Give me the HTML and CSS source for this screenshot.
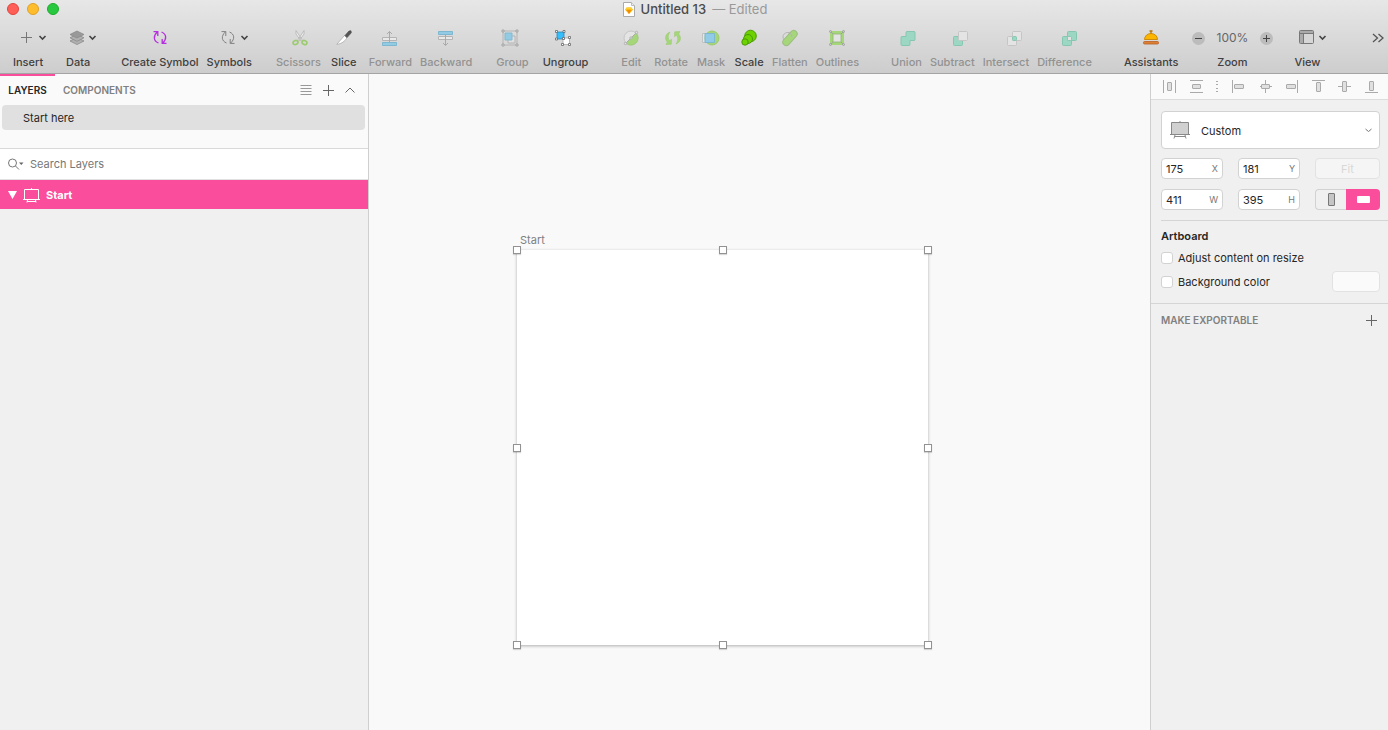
FILE: index.html
```html
<!DOCTYPE html>
<html lang="en">
<head>
<meta charset="utf-8">
<title>Untitled 13</title>
<link rel="stylesheet" href="styles.css">
</head>
<body>
<div class="window">
  <header class="header">
    <div class="titlebar">
      <div class="lights">
        <button class="light light-close" aria-label="Close"></button>
        <button class="light light-min" aria-label="Minimize"></button>
        <button class="light light-zoom" aria-label="Full screen"></button>
      </div>
      <h1 class="title">
        <svg width="12" height="15" viewBox="0 0 12 15"><path d="M.5.5h8l3 3v11H.5z" fill="#fff" stroke="#aaa"/><path d="M8.500 .5v3h3" fill="#eee" stroke="#bbb"/><path d="M3.700 5.500h4.600l1.700 2.300L6 12 2 7.800z" fill="#fdad00"/><path d="M3.700 5.500h4.600L10 7.800H2z" fill="#fdd231"/><path d="M4 7.800h4L6 12z" fill="#f08a00"/></svg>
        <span>Untitled 13</span><span class="edited">— Edited</span>
      </h1>
      <div></div>
    </div>
    <nav class="toolbar" aria-label="Toolbar">
      <div class="group">
        <button class="tool"><span class="icon with-menu"><svg width="28" height="20" viewBox="0 0 28 20" fill="none"><path d="M6.500 4v11M1 9.500h11" stroke="#777"/><path d="M19.500 8l3 3 3-3" stroke="#444" stroke-width="1.600"/></svg></span>Insert</button>
      </div>
      <div class="group gap-m">
        <button class="tool"><span class="icon with-menu"><svg width="28" height="20" viewBox="0 0 28 20" fill="none"><g stroke="#8a8a8a" fill="#b0b0b0" stroke-width=".8"><path d="M0 13L7 9.500l7 3.500-7 3.500z"/><path d="M0 9.800L7 6.300l7 3.500-7 3.500z"/><path d="M0 6.500L7 3l7 3.500L7 10z" fill="#999"/></g><path d="M19.500 8l3 3 3-3" stroke="#444" stroke-width="1.600"/></svg></span>Data</button>
      </div>
      <div class="group gap-xl">
        <button class="tool"><span class="icon"><svg width="16" height="20" viewBox="0 0 16 20" fill="none" stroke="#b52ee0" stroke-width="1.300"><path d="M6.500 15C1.500 13 .8 8 5.500 3.800M1.500 3.600h4.300V8M9.500 4c5 2 5.700 7 1 11.200M14.500 15.400h-4.300V11"/></svg></span>Create Symbol</button>
        <button class="tool"><span class="icon with-menu"><svg width="28" height="20" viewBox="0 0 28 20" fill="none"><path d="M5.500 15C.5 13-.2 8 4.500 3.800M.5 3.600h4.300V8M8.500 4c5 2 5.700 7 1 11.200M13.500 15.400H9.200V11" stroke="#808080"/><path d="M20.500 8l3 3 3-3" stroke="#444" stroke-width="1.600"/></svg></span>Symbols</button>
      </div>
      <div class="group gap-l">
        <button class="tool" disabled><span class="icon nudge"><svg width="16" height="18" viewBox="0 0 16 18" fill="none"><path d="M4 1.500l6.500 10-1.500.5L4 5zM12 1.500L5.500 11.500 7 12l5-7z" fill="#eee" stroke="#b4b4b4" stroke-width=".8"/><ellipse cx="3.500" cy="13.500" rx="2.500" ry="2" transform="rotate(-25 3.500 13.500)" stroke="#9ccb70" stroke-width="1.700"/><ellipse cx="12.500" cy="13.500" rx="2.500" ry="2" transform="rotate(25 12.500 13.500)" stroke="#9ccb70" stroke-width="1.700"/></svg></span>Scissors</button>
        <button class="tool"><span class="icon"><svg width="16" height="18" viewBox="0 0 16 18"><path d="M8.500 6.500l2.500 2.300-2 2.700C6.500 14 3.500 15 .8 15.300z" fill="#fff" stroke="#999" stroke-width=".6"/><path d="M9 6.500l4-4.500 2-.2.300 2-4.300 4.800z" fill="#555" stroke="#444" stroke-width=".6"/></svg></span>Slice</button>
      </div>
      <div class="group gap-xs">
        <button class="tool" disabled><span class="icon"><svg width="16" height="18" viewBox="0 0 16 18" fill="none"><path d="M.5 8.500h14v3H.5z" fill="#e9e9e9" stroke="#b4b4b4"/><path d="M.5 13.500h14v3H.5z" fill="#92cbe3" stroke="#7db8d0"/><path d="M7.500 13V2.500M5 5l2.500-2.500L10 5" stroke="#aaa"/></svg></span>Forward</button>
        <button class="tool" disabled><span class="icon"><svg width="16" height="18" viewBox="0 0 16 18" fill="none"><path d="M.5 2.500h14v3H.5z" fill="#92cbe3" stroke="#7db8d0"/><path d="M.5 7.500h14v3H.5z" fill="#e9e9e9" stroke="#b4b4b4"/><path d="M7.500 6v10.500M5 14l2.500 2.500L10 14" stroke="#aaa"/></svg></span>Backward</button>
      </div>
      <div class="group gap-l">
        <button class="tool" disabled><span class="icon nudge-back"><svg width="18" height="18" viewBox="0 0 18 18" fill="#e0e0e0" stroke="#b4b4b4"><path d="M2 2h14v14H2z" fill="none"/><path d="M7 7h7v7H7z"/><path d="M4 4h7v7H4z" fill="#92cbe3" stroke="#83b9cf"/><path d="M1 1h2v2H1zM15 1h2v2h-2zM1 15h2v2H1zM15 15h2v2h-2z" stroke="#999" stroke-width=".8"/></svg></span>Group</button>
      </div>
      <div class="group gap-s">
        <button class="tool"><span class="icon nudge-back"><svg width="18" height="18" viewBox="0 0 18 18" fill="#fff" stroke="#666" stroke-width=".8"><path d="M9 9h6.500v6.500H9z" stroke="#aaa"/><path d="M3 3h7v7H3z" fill="#36bdfb" stroke="#2688bb"/><path d="M1.500 1.500h2v2h-2zM9 1.500h2v2H9zM1.500 9h2v2h-2zM8.500 8.500h2v2h-2zM14.500 7.500h2v2h-2zM14.500 14.500h2v2h-2zM7.500 14.500h2v2h-2z"/></svg></span>Ungroup</button>
      </div>
      <div class="group gap-xl">
        <button class="tool" disabled><span class="icon"><svg width="16" height="18" viewBox="0 0 16 18" fill="#e4e4e4" stroke="#aaa" stroke-width=".9"><circle cx="8" cy="9" r="7" stroke="#c2c2c2"/><path d="M13 4A7 7 0 0 1 3 14z" fill="#a5d67a" stroke="#9ccb70"/><path d="M2.500 14.500l11-11"/><circle cx="2.500" cy="14.500" r="1.200"/><circle cx="8" cy="9" r="1.200"/><circle cx="13.500" cy="3.500" r="1.200"/></svg></span>Edit</button>
        <button class="tool" disabled><span class="icon nudge"><svg width="16" height="18" viewBox="0 0 16 18" fill="#a5d67a" stroke="#93c867" stroke-width=".5"><path d="M5 3C-.3 5-.4 10 2.300 13L1 15.500l5.300-.3.200-5-1.800 1.600C2.500 9.500 3 6 5 3zM11 15c5.300-2 5.400-7 2.700-10L15 2.500l-5.300.3-.2 5 1.800-1.600c2.200 2.300 1.700 5.800-.3 8.800z"/></svg></span>Rotate</button>
        <button class="tool" disabled><span class="icon"><svg width="18" height="18" viewBox="0 0 18 18"><path d="M.5 4.500h9v9h-9z" fill="#e6e6e6" stroke="#c2c2c2"/><circle cx="10" cy="9" r="7" fill="#a5d67a" stroke="#9ccb70"/><path d="M3 4.500h9.500v9H3z" fill="#92cbe8" stroke="#7fb7cf"/></svg></span>Mask</button>
        <button class="tool"><span class="icon"><svg width="16" height="18" viewBox="0 0 16 18" fill="#6ed100" stroke="#449500" stroke-width=".9"><circle cx="9.500" cy="7" r="5.800"/><circle cx="7" cy="10" r="4.500"/><circle cx="4" cy="13" r="3.200"/></svg></span>Scale</button>
        <button class="tool" disabled><span class="icon"><svg width="16" height="18" viewBox="0 0 16 18"><circle cx="5.500" cy="8" r="4.500" fill="#ddd" stroke="#b4b4b4"/><rect x="4.500" y="0" width="7" height="18" rx="3.500" fill="#a5d67a" stroke="#9cbd80" transform="rotate(42 8 9)"/><path d="M10 8a4.500 4.500 0 0 0-4.500-4.500" fill="none" stroke="#b4b4b4"/></svg></span>Flatten</button>
        <button class="tool" disabled><span class="icon"><svg width="16" height="18" viewBox="0 0 16 18" fill="#ccc" stroke="#999" stroke-width=".8"><path d="M2.500 3.500h11v11h-11z" fill="none" stroke="#a5d67a" stroke-width="3"/><path d="M4 5h8v8H4z" fill="#e3e3e3" stroke="#93b576"/><path d="M1 2l3 3M15 2l-3 3M1 16l3-3M15 16l-3-3"/><circle cx="1.500" cy="2.500" r="1"/><circle cx="14.500" cy="2.500" r="1"/><circle cx="1.500" cy="15.500" r="1"/><circle cx="14.500" cy="15.500" r="1"/></svg></span>Outlines</button>
      </div>
      <div class="group gap-xxl">
        <button class="tool" disabled><span class="icon nudge"><svg width="16" height="18" viewBox="0 0 16 18"><path d="M7 2.500h7q1 0 1 1v7q0 1-1 1h-4v4q0 1-1 1H2q-1 0-1-1v-7q0-1 1-1h4v-4q0-1 1-1z" fill="#9cd7c4" stroke="#87c6b1"/></svg></span>Union</button>
        <button class="tool" disabled><span class="icon nudge-far"><svg width="16" height="18" viewBox="0 0 16 18"><rect x="1.500" y="7.500" width="9" height="9" rx="1" fill="#9cd7c4" stroke="#87c6b1"/><rect x="6.500" y="2.500" width="9" height="9" rx="1" fill="#e4e4e4" stroke="#c5c5c5"/></svg></span>Subtract</button>
        <button class="tool" disabled><span class="icon nudge-far"><svg width="16" height="18" viewBox="0 0 16 18"><rect x="1.500" y="7.500" width="9" height="9" rx="1" fill="#e4e4e4" stroke="#c5c5c5"/><rect x="6.500" y="2.500" width="9" height="9" rx="1" fill="#e4e4e4" stroke="#c5c5c5"/><rect x="6.500" y="7.500" width="4" height="4" rx="1" fill="#9cd7c4" stroke="#87c6b1"/></svg></span>Intersect</button>
        <button class="tool" disabled><span class="icon nudge-mid"><svg width="16" height="18" viewBox="0 0 16 18" fill="#9cd7c4" stroke="#87c6b1"><rect x="1.500" y="7.500" width="9" height="9" rx="1"/><rect x="6.500" y="2.500" width="9" height="9" rx="1"/><rect x="6.500" y="7.500" width="4" height="4" rx="1" fill="#e4e4e4"/></svg></span>Difference</button>
      </div>
      <div class="group gap-xxl">
        <button class="tool"><span class="icon"><svg width="16" height="18" viewBox="0 0 16 18"><path d="M6.500 2h3M8 2v3" stroke="#bd7600" stroke-width="1.300"/><path d="M1.500 10.500a6.500 6 0 0 1 13 0z" fill="#fdb600" stroke="#c98600" stroke-width=".9"/><rect x=".5" y="12.500" width="15" height="2.500" rx="1" fill="#dd8035" stroke="#b85e20" stroke-width=".8"/></svg></span>Assistants</button>
      </div>
      <div class="group gap-s">
        <div class="tool zoom">
          <div class="icon zoom-row">
            <button class="round" aria-label="Zoom out"><svg width="13" height="13" viewBox="0 0 13 13"><path d="M3 6.500h7" stroke="#444"/></svg></button>
            <output class="percent">100%</output>
            <button class="round" aria-label="Zoom in"><svg width="13" height="13" viewBox="0 0 13 13"><path d="M3 6.500h7M6.500 3v7" stroke="#444"/></svg></button>
          </div>
          Zoom
        </div>
      </div>
      <div class="group gap-m">
        <button class="tool"><span class="icon with-menu"><svg width="28" height="20" viewBox="0 0 28 20" fill="none"><rect x=".5" y="2.500" width="14" height="13" rx="1" fill="#d6d6d6" stroke="#777"/><path d="M1 3h13v2H1zM1 6h3v9H1z" fill="#aaa"/><path d="M1 5.500h13M4.500 6v9" stroke="#777"/><path d="M20.500 8l3 3 3-3" stroke="#444" stroke-width="1.600"/></svg></span>View</button>
      </div>
      <button class="more" aria-label="More tools"><svg width="12" height="10" viewBox="0 0 12 10" fill="none" stroke="#555" stroke-width="1.300"><path d="M1 1l4.500 4L1 9M6.500 1L11 5 6.500 9"/></svg></button>
    </nav>
  </header>

  <div class="workspace">
    <aside class="sidebar">
      <section class="pages">
        <div class="tabs">
          <button class="tab tab-active">LAYERS</button>
          <button class="tab">COMPONENTS</button>
          <div class="tab-actions">
            <button aria-label="List"><svg width="12" height="12" viewBox="0 0 12 12" stroke="#999"><path d="M.5 1.500h11M.5 4.500h11M.5 7.500h11M.5 10.500h11"/></svg></button>
            <button aria-label="Add page"><svg width="12" height="12" viewBox="0 0 12 12" stroke="#666"><path d="M6.500 1v11M1 6.500h11"/></svg></button>
            <button aria-label="Collapse"><svg width="12" height="12" viewBox="0 0 12 12" fill="none" stroke="#666"><path d="M1.500 8.500L6 4l4.500 4.500"/></svg></button>
          </div>
        </div>
        <button class="page">Start here</button>
      </section>
      <label class="search">
        <svg width="16" height="14" viewBox="0 0 16 14" fill="none" stroke="#777"><circle cx="4.500" cy="6" r="4"/><path d="M7.500 9l3.500 3.500"/><path d="M11 5.500h4.500L13.300 8z" fill="#666" stroke="none"/></svg>
        <input type="text" placeholder="Search Layers" aria-label="Search Layers">
      </label>
      <button class="layer">
        <svg width="9" height="8" viewBox="0 0 9 8"><path d="M0 0h9L4.500 8z" fill="#fff"/></svg>
        <svg width="17" height="16" viewBox="0 0 17 16" fill="none" stroke="#fff"><path d="M1.500 12V2.500h14V12M0 12.500h17M8.500 1v1M4.500 13L4 15.500M12.500 13l.5 2.500M4 14.500h9"/></svg>
        <span>Start</span>
      </button>
    </aside>

    <main class="canvas">
      <div class="artboard">
        <span class="artboard-name">Start</span>
        <i class="handle left top"></i><i class="handle center top"></i><i class="handle right top"></i>
        <i class="handle left middle"></i><i class="handle right middle"></i>
        <i class="handle left bottom"></i><i class="handle center bottom"></i><i class="handle right bottom"></i>
      </div>
    </main>

    <aside class="inspector">
      <div class="align">
        <button aria-label="Distribute horizontally"><svg class="align-icon" viewBox="0 0 13 13"><path d="M.5 0v13M12.500 0v13"/><rect x="4.500" y="2.500" width="4" height="8" rx=".5"/></svg></button>
        <button aria-label="Distribute vertically"><svg class="align-icon" viewBox="0 0 13 13"><path d="M0 .5h13M0 12.500h13"/><rect x="2.500" y="4.500" width="8" height="4" rx=".5"/></svg></button>
        <svg class="align-dots" viewBox="0 0 2 13"><path d="M0 1.500h2M0 4.500h2M0 8.500h2M0 11.500h2"/></svg>
        <button aria-label="Align left"><svg class="align-icon" viewBox="0 0 13 13"><path d="M.5 0v13"/><rect x="2.500" y="4.500" width="9" height="4" rx=".5"/></svg></button>
        <button aria-label="Align center"><svg class="align-icon" viewBox="0 0 13 13"><path d="M6.500 0v13M1 6.500h12"/><rect x="2.500" y="4.500" width="8" height="4" rx=".5"/></svg></button>
        <button aria-label="Align right"><svg class="align-icon" viewBox="0 0 13 13"><path d="M12.500 0v13"/><rect x="1.500" y="4.500" width="9" height="4" rx=".5"/></svg></button>
        <button aria-label="Align top"><svg class="align-icon" viewBox="0 0 13 13"><path d="M0 .5h13"/><rect x="4.500" y="2.500" width="4" height="9" rx=".5"/></svg></button>
        <button aria-label="Align middle"><svg class="align-icon" viewBox="0 0 13 13"><path d="M0 6.500h13"/><rect x="4.500" y="1.500" width="4" height="10" rx=".5"/></svg></button>
        <button aria-label="Align bottom"><svg class="align-icon" viewBox="0 0 13 13"><path d="M0 12.500h13"/><rect x="4.500" y="1.500" width="4" height="9" rx=".5"/></svg></button>
      </div>

      <section class="geometry">
        <div class="preset">
          <svg width="20" height="18" viewBox="0 0 20 18" fill="none" stroke="#888"><path d="M1.500 1.500h17v12h-17z" fill="#d0d0d0"/><path d="M0 13.500h20M10 0v1M5 14l-1 3.500M15 14l1 3.500M5 15.500h10"/></svg>
          <select aria-label="Artboard preset"><option>Custom</option></select>
          <svg class="preset-arrow" width="7" height="5" viewBox="0 0 7 5" fill="none" stroke="#777"><path d="M.5 1l3 2.500 3-2.500"/></svg>
        </div>
        <div class="fields">
          <label class="field"><input type="text" value="175"><span>X</span></label>
          <label class="field"><input type="text" value="181"><span>Y</span></label>
          <button class="fit" disabled>Fit</button>
          <label class="field"><input type="text" value="411"><span>W</span></label>
          <label class="field"><input type="text" value="395"><span>H</span></label>
          <div class="orientation">
            <button class="portrait" aria-label="Portrait"><svg width="7" height="13" viewBox="0 0 7 13"><rect x=".5" y=".5" width="6" height="12" rx=".5" fill="#c5c5c5" stroke="#777"/></svg></button>
            <button class="landscape" aria-label="Landscape" aria-pressed="true"><svg width="13" height="7" viewBox="0 0 13 7"><rect width="13" height="7" rx="1" fill="#fff"/></svg></button>
          </div>
        </div>
      </section>

      <section class="options">
        <h2>Artboard</h2>
        <label class="check"><input type="checkbox">Adjust content on resize</label>
        <div class="color-row">
          <label class="check"><input type="checkbox">Background color</label>
          <button class="swatch" aria-label="Choose background color"></button>
        </div>
      </section>

      <section class="export">
        <h2>MAKE EXPORTABLE</h2>
        <button aria-label="Add export"><svg width="12" height="12" viewBox="0 0 12 12" stroke="#666"><path d="M6.500 1v11M1 6.500h11"/></svg></button>
      </section>
    </aside>
  </div>
</div>
</body>
</html>
```
FILE: styles.css
```css
* { box-sizing: border-box; }

body {
  margin: 0;
  font: 11px/16px Inter, "Liberation Sans", sans-serif;
  color: #262626;
}

button, input, select {
  margin: 0;
  padding: 0;
  border: 0;
  background: none;
  font: inherit;
  color: inherit;
  appearance: none;
  outline: 0;
}

svg { display: block; flex: none; }
h1, h2 { margin: 0; font-size: 11px; }

.window { display: flex; flex-direction: column; height: 100vh; }

/* Header */
.header {
  background: linear-gradient(#e7e7e7, #cdcdcd);
  border-bottom: 1px solid #a4a4a4;
}

.titlebar {
  display: grid;
  grid-template-columns: 1fr auto 1fr;
  align-items: center;
  height: 18px;
  padding: 0 5px 0 7px;
}

.lights { display: flex; gap: 8px; }
.light { width: 12px; height: 12px; border-radius: 50%; border: 1px solid; }
.light-close { background: #ff5f57; border-color: #e0443e; }
.light-min { background: #ffbd2e; border-color: #dea123; }
.light-zoom { background: #28c940; border-color: #1dad2b; }

.title {
  display: flex;
  align-items: center;
  gap: 6px;
  font-size: 13px;
  font-weight: 500;
  color: #4a4a4a;
}
.edited { color: #999; font-weight: 400; }

.toolbar {
  display: flex;
  align-items: flex-start;
  height: 55px;
  padding: 8px 4px 0 9px;
}

.group { display: flex; flex: none; }
.gap-xs { margin-left: 2px; }
.gap-s { margin-left: 6px; }
.gap-m { margin-left: 12px; }
.gap-l { margin-left: 16px; }
.gap-xl { margin-left: 20px; }
.gap-xxl { margin-left: 24px; }

.tool {
  display: flex;
  flex-direction: column;
  align-items: center;
  gap: 4px;
  min-width: 38px;
  padding: 0 4px;
  font-weight: 500;
  white-space: nowrap;
  color: #404040;
}
.tool:disabled { color: #929292; }

.icon { display: flex; align-items: center; height: 24px; }
.with-menu { width: 16px; }
.nudge { padding-left: 4px; }
.nudge-mid { padding-left: 8px; }
.nudge-far { padding-left: 16px; }
.nudge-back { padding-right: 4px; }

.zoom { width: 88px; }
.zoom-row { gap: 12px; }
.round { width: 13px; height: 13px; border-radius: 50%; background: #bcbcbc; }
.percent { font-size: 12px; font-weight: 400; color: #666; }
.more { margin: 7px 0 0 auto; }

/* Columns */
.workspace {
  display: grid;
  grid-template-columns: 369px 1fr 238px;
  flex: 1;
  min-height: 0;
}

.sidebar {
  display: flex;
  flex-direction: column;
  background: #f0f0f0;
  border-right: 1px solid #cfcfcf;
}

.pages {
  height: 75px;
  padding: 0 3px 0 2px;
  background: #fafafa;
  border-bottom: 1px solid #d9d9d9;
}

.tabs { display: flex; height: 31px; margin-left: -2px; }
.tab { padding: 0 8px; font-size: 10px; font-weight: 600; color: #808080; }
.tab-active {
  width: 55px;
  color: #262626;
  border-top: 2px solid #fa4d9c;
  border-bottom: 2px solid transparent;
}
.tab-actions { display: flex; align-items: center; gap: 10px; margin-left: auto; padding-right: 9px; }

.page {
  width: 100%;
  height: 25px;
  padding-left: 21px;
  border-radius: 4px;
  background: #e0e0e0;
  text-align: left;
}

.search {
  display: flex;
  align-items: center;
  gap: 6px;
  height: 31px;
  padding-left: 8px;
  background: #fff;
  border-bottom: 1px solid #e0e0e0;
}
.search input { flex: 1; }
.search input::placeholder { color: #777; opacity: 1; }

.layer {
  display: flex;
  align-items: center;
  gap: 6px;
  height: 29px;
  padding-left: 8px;
  background: #fa4d9c;
  color: #fff;
  font-weight: 700;
}

/* Canvas */
.canvas { position: relative; background: #f9f9f9; overflow: hidden; }

.artboard {
  position: absolute;
  left: 148px;
  top: 176px;
  width: 411px;
  height: 395px;
  background: #fff;
  box-shadow: 0 1px 3px rgba(0, 0, 0, .3);
}
.artboard-name { position: absolute; left: 3px; top: -18px; color: #808080; }

.handle {
  position: absolute;
  width: 8px;
  height: 8px;
  margin: -4px;
  border: 1px solid #929292;
  background: #fff;
  box-shadow: 0 1px 1px rgba(0, 0, 0, .15);
}
.left { left: 0; }
.center { left: 50%; }
.right { left: 100%; }
.top { top: 0; }
.middle { top: 50%; }
.bottom { top: 100%; }

/* Inspector */
.inspector { background: #f0f0f0; border-left: 1px solid #cfcfcf; }

.align {
  display: flex;
  align-items: center;
  justify-content: space-between;
  height: 26px;
  padding: 0 10px 0 12px;
  background: #fafafa;
  border-bottom: 1px solid #dcdcdc;
}
.align-icon { width: 13px; height: 13px; fill: #e0e0e0; stroke: #aaa; }
.align-dots { width: 2px; height: 13px; stroke: #aaa; }

.geometry { margin-left: 10px; padding: 11px 8px 10px 0; border-bottom: 1px solid #d5d5d5; }

.preset {
  position: relative;
  display: flex;
  align-items: center;
  gap: 11px;
  height: 38px;
  padding-left: 8px;
  border: 1px solid #d2d2d2;
  border-radius: 4px;
  background: #fff;
}
.preset select { flex: 1; height: 36px; padding-top: 2px; }
.preset-arrow { position: absolute; right: 7px; pointer-events: none; }

.fields {
  display: grid;
  grid-template-columns: 62px 62px 65px;
  justify-content: space-between;
  gap: 10px 0;
  margin-top: 9px;
}

.field, .fit {
  display: flex;
  height: 21px;
  border: 1px solid #d2d2d2;
  border-radius: 4px;
}
.field { align-items: center; padding: 0 4px; background: #fff; }
.field input { flex: 1; min-width: 0; }
.field span { font-size: 9px; color: #777; }
.fit { align-items: center; justify-content: center; border-color: #e2e2e2; background: #f5f5f5; color: #d8d8d8; }

.orientation { display: flex; height: 21px; }
.orientation button { display: flex; align-items: center; justify-content: center; }
.portrait { width: 31px; border: 1px solid #d2d2d2; border-right: 0; border-radius: 4px 0 0 4px; }
.landscape { flex: 1; border-radius: 0 4px 4px 0; background: #fa4d9c; }

.options { padding: 7px 8px 11px 10px; border-bottom: 1px solid #d5d5d5; }
.options h2 { font-weight: 600; margin-bottom: 6px; }

.check { display: flex; align-items: center; gap: 5px; }
.check input { width: 12px; height: 12px; border: 1px solid #d2d2d2; border-radius: 3px; background: #fff; }

.color-row { display: flex; align-items: center; justify-content: space-between; margin-top: 5px; }
.swatch { width: 48px; height: 21px; border: 1px solid #e2e2e2; border-radius: 4px; background: #fafafa; }

.export { display: flex; align-items: center; justify-content: space-between; height: 31px; padding: 0 11px 0 10px; }
.export h2 { font-size: 10px; font-weight: 600; color: #808080; }
```
